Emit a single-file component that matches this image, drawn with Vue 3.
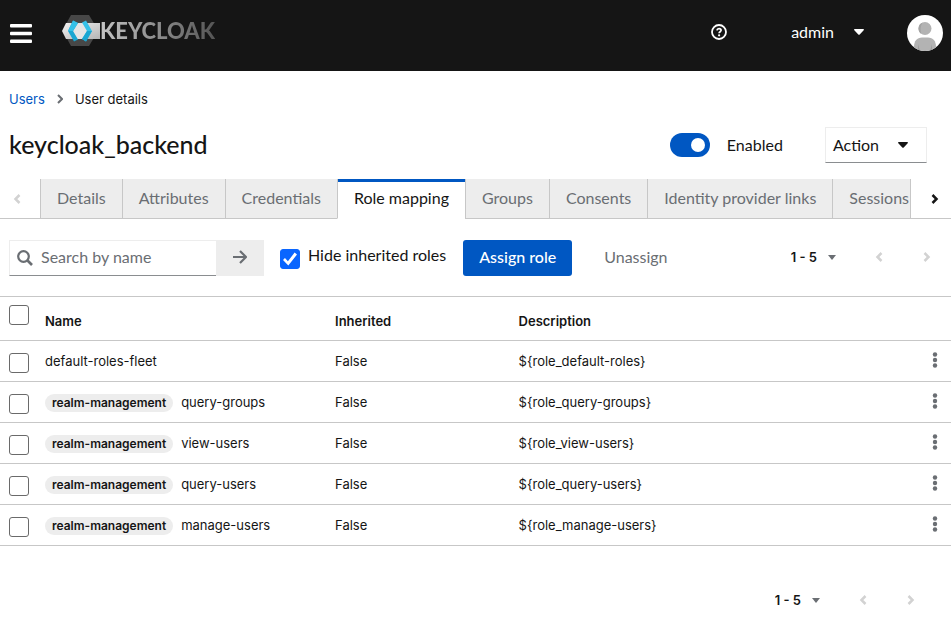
<script setup>
import { ref, computed } from 'vue'

const tabs = ['Details', 'Attributes', 'Credentials', 'Role mapping', 'Groups', 'Consents', 'Identity provider links', 'Sessions']
const activeTab = ref('Role mapping')
const enabled = ref(true)
const hideInherited = ref(true)
const search = ref('')
const selected = ref([])

const roles = [
  { client: '', name: 'default-roles-fleet', description: '${role_default-roles}' },
  { client: 'realm-management', name: 'query-groups', description: '${role_query-groups}' },
  { client: 'realm-management', name: 'view-users', description: '${role_view-users}' },
  { client: 'realm-management', name: 'query-users', description: '${role_query-users}' },
  { client: 'realm-management', name: 'manage-users', description: '${role_manage-users}' },
]

const allSelected = computed({
  get: () => selected.value.length === roles.length,
  set: (on) => { selected.value = on ? roles.map((r) => r.name) : [] },
})
</script>

<template>
  <div class="page">
    <header class="masthead">
      <button class="plain menu" aria-label="Global navigation">
        <svg width="22" height="19" viewBox="0 0 22 19" fill="#fff">
          <rect y="0" width="22" height="3.500" rx="1" /><rect y="7.700" width="22" height="3.500" rx="1" /><rect y="15.400" width="22" height="3.500" rx="1" />
        </svg>
      </button>
      <a class="brand" href="#" aria-label="Keycloak">
        <svg width="38" height="32" viewBox="0 0 38 32">
          <defs>
            <linearGradient id="band" x1="0" x2="1" y1="0" y2="1">
              <stop offset="0" stop-color="#f2f2f2" /><stop offset="1" stop-color="#b5b5b5" />
            </linearGradient>
          </defs>
          <path d="M9 0h18l6 10v11l-6 10H9L4 22V9z" fill="#474747" />
          <path d="M4 8h34v16H4L0 16z" fill="url(#band)" />
          <path d="M15 8h6l4 8-4 8h-6l-4-8z" fill="#e4e4e4" />
          <path d="M11 5.500l5 2.500-5 8 5 8.500-4 2-6-10.500z" fill="#1aa6d2" />
          <path d="M11 5.500l5 2.500-5 8H6z" fill="#35c1e8" />
          <path d="M20 7.500l4-2 6 10.500-6 10.500-4-2.500 5-8z" fill="#35c1e8" />
          <path d="M25 16h5l-6 10.500-4-2.500z" fill="#1aa6d2" />
        </svg>
        <span class="wordmark">KEYCLOAK</span>
      </a>
      <div class="tools">
        <button class="plain help" aria-label="Help">
          <svg width="16" height="16" viewBox="0 0 16 16" fill="none" stroke="#fff">
            <circle cx="8" cy="8" r="7" stroke-width="1.800" />
            <path d="M5.900 6.400c.2-1.200 1-1.800 2.100-1.800 1.200 0 2.100.7 2.100 1.700 0 1.400-2 1.400-2 2.900" stroke-width="1.700" />
            <circle cx="8.100" cy="11.300" r="1.100" fill="#fff" stroke="none" />
          </svg>
        </button>
        <button class="plain user">
          <span>admin</span>
          <svg width="10" height="6" viewBox="0 0 10 6" fill="#fff"><path d="M.8 0h8.400c.8 0 1 .7.500 1.200L5.700 5.500c-.4.400-1 .4-1.400 0L.3 1.200C-.2.7 0 0 .8 0z" /></svg>
        </button>
        <svg class="avatar" width="36" height="36" viewBox="0 0 36 36" role="img" aria-label="Avatar">
          <defs><clipPath id="round"><circle cx="18" cy="18" r="18" /></clipPath></defs>
          <g clip-path="url(#round)">
            <rect width="36" height="36" fill="#fff" />
            <path d="M7 36v-4c0-6 3-9.500 8-9.500h6c5 0 8 3.500 8 9.500v4z" fill="#b3b3b3" />
            <path d="M11 29l2 7h-2zM25 29v7h-2z" fill="#9c9c9c" />
            <circle cx="18" cy="13.500" r="6.500" fill="#b3b3b3" />
            <path d="M15.500 7.500a6.500 6.500 0 0 0-1 11.500c-1.500-4-1-8 1-11.500z" fill="#a3a3a3" />
          </g>
        </svg>
      </div>
    </header>

    <main>
      <nav class="crumbs" aria-label="Breadcrumb">
        <a href="#">Users</a>
        <svg width="6" height="10" viewBox="0 0 6 10" fill="none" stroke="#6a6e73" stroke-width="2"><path d="M1 1l4 4-4 4" /></svg>
        <span>User details</span>
      </nav>

      <div class="heading">
        <h1>keycloak_backend</h1>
        <label class="switch">
          <input v-model="enabled" type="checkbox" role="switch" />
          <span>Enabled</span>
        </label>
        <button class="action">
          <span>Action</span>
          <svg width="10" height="6" viewBox="0 0 10 6" fill="#151515"><path d="M.8 0h8.400c.8 0 1 .7.500 1.200L5.700 5.500c-.4.400-1 .4-1.400 0L.3 1.200C-.2.7 0 0 .8 0z" /></svg>
        </button>
      </div>

      <div class="tabbar">
        <button class="plain scroll" aria-label="Scroll left" disabled>
          <svg width="8" height="10" viewBox="0 0 8 10" fill="none" stroke="#d2d2d2" stroke-width="2.500"><path d="M6.500 1l-4 4 4 4" /></svg>
        </button>
        <div class="tabs" role="tablist">
          <button v-for="t in tabs" :key="t" role="tab" class="tab" :class="{ active: t === activeTab }" :aria-selected="t === activeTab" @click="activeTab = t">{{ t }}</button>
        </div>
        <button class="plain scroll end" aria-label="Scroll right">
          <svg width="8" height="10" viewBox="0 0 8 10" fill="none" stroke="#151515" stroke-width="2.500"><path d="M1.500 1l4 4-4 4" /></svg>
        </button>
      </div>

      <div class="toolbar">
        <form class="search" @submit.prevent>
          <div class="field">
            <svg width="16" height="16" viewBox="0 0 16 16" fill="none" stroke="#6a6e73"><circle cx="6.500" cy="6.500" r="5.300" stroke-width="2.200" /><path d="M10.500 10.500l4.500 4.500" stroke-width="2.600" /></svg>
            <input v-model="search" type="text" placeholder="Search by name" aria-label="Search by name" />
          </div>
          <button class="go" aria-label="Search">
            <svg width="14" height="14" viewBox="0 0 14 14" fill="none" stroke="#6a6e73" stroke-width="2.200"><path d="M0 7h12.500M7 1l6 6-6 6" /></svg>
          </button>
        </form>
        <label class="hide">
          <input v-model="hideInherited" class="box" type="checkbox" />
          <span>Hide inherited roles</span>
        </label>
        <button class="primary">Assign role</button>
        <button class="plain unassign" disabled>Unassign</button>
        <div class="pager">
          <button class="plain range"><b>1 - 5</b>
            <svg width="8" height="5" viewBox="0 0 8 5" fill="#6a6e73"><path d="M0 0h8L4 5z" /></svg>
          </button>
          <button class="plain step" aria-label="Previous page" disabled><svg width="8" height="10" viewBox="0 0 8 10" fill="none" stroke="#d2d2d2" stroke-width="2.500"><path d="M6.500 1l-4 4 4 4" /></svg></button>
          <button class="plain step" aria-label="Next page" disabled><svg width="8" height="10" viewBox="0 0 8 10" fill="none" stroke="#d2d2d2" stroke-width="2.500"><path d="M1.500 1l4 4-4 4" /></svg></button>
        </div>
      </div>

      <table>
        <colgroup><col class="c-check" /><col class="c-name" /><col class="c-inherited" /><col /><col class="c-menu" /></colgroup>
        <thead>
          <tr>
            <td><input v-model="allSelected" class="box" type="checkbox" aria-label="Select all rows" /></td>
            <th scope="col">Name</th>
            <th scope="col">Inherited</th>
            <th scope="col">Description</th>
            <td></td>
          </tr>
        </thead>
        <tbody>
          <tr v-for="r in roles" :key="r.name">
            <td><input v-model="selected" class="box" type="checkbox" :value="r.name" :aria-label="r.name" /></td>
            <td><span v-if="r.client" class="badge">{{ r.client }}</span>{{ r.name }}</td>
            <td>False</td>
            <td>{{ r.description }}</td>
            <td>
              <button class="plain kebab" aria-label="Row actions">
                <svg width="6" height="16" viewBox="0 0 6 16" fill="#6a6e73"><circle cx="3" cy="2.500" r="2.200" /><circle cx="3" cy="8" r="2.200" /><circle cx="3" cy="13.500" r="2.200" /></svg>
              </button>
            </td>
          </tr>
        </tbody>
      </table>

      <div class="pager bottom">
        <button class="plain range"><b>1 - 5</b>
          <svg width="8" height="5" viewBox="0 0 8 5" fill="#6a6e73"><path d="M0 0h8L4 5z" /></svg>
        </button>
        <button class="plain step" aria-label="Previous page" disabled><svg width="8" height="10" viewBox="0 0 8 10" fill="none" stroke="#d2d2d2" stroke-width="2.500"><path d="M6.500 1l-4 4 4 4" /></svg></button>
        <button class="plain step" aria-label="Next page" disabled><svg width="8" height="10" viewBox="0 0 8 10" fill="none" stroke="#d2d2d2" stroke-width="2.500"><path d="M1.500 1l4 4-4 4" /></svg></button>
      </div>
    </main>
  </div>
</template>

<style>
body { margin: 0; background: #fff; }
</style>

<style scoped>
.page { font-family: Lato, "Liberation Sans", sans-serif; font-size: 16px; line-height: 24px; color: #151515; }
* { box-sizing: border-box; }
button, input { font: inherit; color: inherit; margin: 0; }
svg { display: block; flex: none; }
.plain { border: 0; background: none; padding: 0; display: flex; align-items: center; }

.masthead { display: flex; align-items: center; height: 71px; padding: 0 8px 5px 10px; background: #151515; color: #fff; }
.brand { display: flex; align-items: center; margin-left: 30px; padding-bottom: 4px; text-decoration: none; }
.wordmark { font-size: 22px; font-weight: 900; background: linear-gradient(90deg, #c4c4c4, #555); background-clip: text; color: transparent; }
.tools { display: flex; align-items: center; margin-left: auto; }
.help { padding-bottom: 2px; }
.user { gap: 20px; margin: 0 43px 0 64px; padding-bottom: 2px; }

.crumbs { display: flex; align-items: center; gap: 12px; padding: 18px 9px 0; font-family: Inter, Lato, sans-serif; font-size: 13px; line-height: 20px; }
.crumbs a { color: #0057c2; text-decoration: none; }

.heading { display: flex; align-items: center; padding: 18px 24px 16px 9px; }
h1 { margin: 0; padding-bottom: 2px; font-size: 25px; line-height: 32px; font-weight: 500; }
.switch { display: flex; align-items: center; gap: 17px; margin-left: auto; }
.switch input { appearance: none; width: 40px; height: 24px; padding: 5px; border-radius: 12px; background: #8a8d90; display: flex; }
.switch input::before { content: ""; width: 14px; height: 14px; border-radius: 50%; background: #fff; }
.switch input:checked { background: #0057c2; justify-content: flex-end; }
.action { display: flex; align-items: center; gap: 19px; height: 36px; margin-left: 42px; padding: 0 18px 0 7px; border: 1px solid #ededed; border-bottom-color: #8a8d90; background: #fff; }
.action span { padding-bottom: 1px; }

.tabbar { display: flex; height: 40px; }
.scroll { flex: none; width: 40px; justify-content: center; border-bottom: 1px solid #c7c7c7; padding-right: 6px; }
.scroll.end { width: 41px; border-left: 1px solid #c7c7c7; padding: 0 0 0 8px; }
.tabs { display: flex; flex: 1; min-width: 0; overflow: hidden; }
.tab { flex: none; padding: 0 16px 2px; border: 0; border-left: 1px solid #c7c7c7; border-bottom: 1px solid #c7c7c7; background: #ededed; color: #6a6e73; }
.tab.active { background: linear-gradient(#0057c2 3px, #fff 3px); border-bottom-color: #fff; color: #151515; }

.toolbar { display: flex; align-items: center; padding: 21px 0 20px 9px; }
.search { display: flex; flex: 0 1 255px; min-width: 0; height: 36px; }
.field { display: flex; flex: 1; min-width: 0; align-items: center; gap: 8px; padding-left: 7px; border: 1px solid #ededed; border-right: 0; border-bottom-color: #8a8d90; }
.field input { flex: 1; min-width: 0; padding: 0 0 2px; border: 0; outline: 0; background: none; }
.field input::placeholder { color: #6a6e73; }
.go { display: flex; align-items: center; justify-content: center; width: 48px; padding: 0 0 2px; border: 0; background: #ededed; }
.box { appearance: none; display: flex; align-items: center; justify-content: center; flex: none; width: 20px; height: 20px; border: 1px solid #6a6a6a; border-radius: 3px; background: #fff; }
.box:checked { background: #0a66ff; border-color: #0a66ff; }
.box:checked::before { content: ""; width: 14px; height: 14px; background: #fff; clip-path: polygon(0 58%, 14% 43%, 35% 66%, 83% 4%, 100% 17%, 38% 96%); }
.hide { display: flex; margin: 0 17px 0 16px; gap: 8px; line-height: 20px; padding-bottom: 2px; }
.hide .box { margin-top: 4px; }
.primary { height: 36px; padding: 0 16px 2px; border: 0; border-radius: 3px; background: #0057c2; color: #fff; font-weight: 500; }
.unassign { margin-left: 32px; padding-bottom: 2px; color: #6a6e73; }

.pager { display: flex; align-items: center; margin-left: auto; font-family: Inter, Lato, sans-serif; font-size: 13px; }
.pager b { font-weight: 600; }
.range { gap: 11px; margin-right: 19px; }
.step { width: 48px; height: 36px; justify-content: center; }
.toolbar .range, .toolbar .step { padding-bottom: 2px; }
.bottom { justify-content: flex-end; padding: 36px 16px 0 0; }

table { width: 100%; table-layout: fixed; border-collapse: separate; border-spacing: 0; border-top: 1px solid #c7c7c7; font-family: Inter, Lato, sans-serif; font-size: 13px; line-height: 20px; }
.c-check { width: 45px; }
.c-name { width: 30.5%; }
.c-inherited { width: 19.3%; }
.c-menu { width: 32px; }
td, th { padding: 0; height: 41px; border-bottom: 1px solid #c7c7c7; text-align: left; vertical-align: middle; }
thead td, thead th { height: 44px; }
th { font-weight: 600; padding-top: 5px; }
td:first-child { padding: 3px 0 0 9px; }
thead td:first-child { padding: 0 0 7px 9px; }
.badge { display: inline-block; margin-right: 8px; padding: 0 7px; border-radius: 9px; background: #ededed; font-size: 12px; line-height: 18px; font-weight: 600; }
.kebab { width: 32px; height: 36px; padding-bottom: 2px; justify-content: center; }
</style>
